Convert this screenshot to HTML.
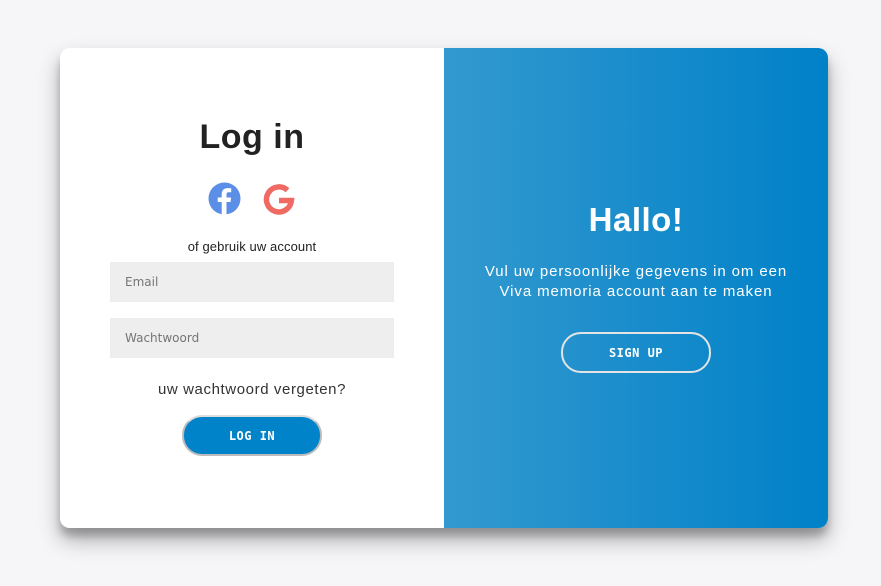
<!DOCTYPE html>
<html><head><style>
body{margin:0;width:881px;height:586px;background:#f6f6f8;font-family:"Liberation Sans",sans-serif;position:relative;overflow:hidden}
.card{position:absolute;left:60px;top:48px;width:768px;height:480px;border-radius:10px;overflow:hidden;box-shadow:0 12px 22px rgba(0,0,0,.3),0 8px 8px rgba(0,0,0,.2);background:#fff}
.left{position:absolute;left:0;top:0;width:384px;height:480px;background:#fff}
.right{position:absolute;left:384px;top:0;width:384px;height:480px;background:linear-gradient(90deg,#3399cf,#0081c8)}
.t{position:absolute;width:100%;text-align:center}
input{position:absolute;left:50px;width:284px;height:40px;border:0;background:#eee;box-sizing:border-box;padding-left:15px;font:12px "DejaVu Sans",sans-serif;color:#777}
.btn{position:absolute;border-radius:20px;box-sizing:border-box;text-align:center;font:bold 12px "DejaVu Sans Mono","Liberation Mono",monospace;letter-spacing:0.5px}
</style></head><body>
<div class="card">
<div class="left">
<div class="t" style="top:70px;font-size:34px;font-weight:bold;color:#222;letter-spacing:0.5px">Log in</div>
<svg style="position:absolute;left:148px;top:134px" width="33" height="33" viewBox="0 0 33 33"><circle cx="16.5" cy="16.5" r="16" fill="#5b8ee6"/><path d="M18.5 33V20h4l.6-4.5h-4.6v-3c0-1.3.4-2.2 2.2-2.2h2.5V6.3c-.5-.1-1.9-.2-3.6-.2-3.6 0-5.9 2.2-5.9 6.1v3.3h-4V20h4v13z" fill="#fff"/></svg>
<svg style="position:absolute;left:201px;top:133px" width="36" height="36" viewBox="0 0 36 36"><path d="M26.5 9.3A12.5 12.5 0 1 0 30.4 19.5H18" fill="none" stroke="#ef6a63" stroke-width="5.5"/></svg>
<div class="t" style="top:191px;font-size:13px;color:#222;letter-spacing:0.1px">of gebruik uw account</div>
<input style="top:214px" placeholder="Email">
<input style="top:270px" placeholder="Wachtwoord">
<div class="t" style="top:333px;font-size:15px;color:#333;letter-spacing:0.6px">uw wachtwoord vergeten?</div>
<div class="btn" style="left:122px;top:367px;width:140px;height:41px;background:#0083c8;color:#fff;line-height:38px;border:2px solid #bbb;border-top-color:#ddd">LOG IN</div>
</div>
<div class="right">
<div class="t" style="top:153px;font-size:33px;font-weight:bold;color:#fff;letter-spacing:0.5px">Hallo!</div>
<div class="t" style="top:214px;font-size:15px;line-height:20px;color:#fff;letter-spacing:0.9px">Vul uw persoonlijke gegevens in om een<br>Viva memoria account aan te maken</div>
<div class="btn" style="left:117px;top:284px;width:150px;height:41px;border:2px solid #e4e4e4;color:#fff;line-height:38px">SIGN UP</div>
</div>
</div>
</body></html>
